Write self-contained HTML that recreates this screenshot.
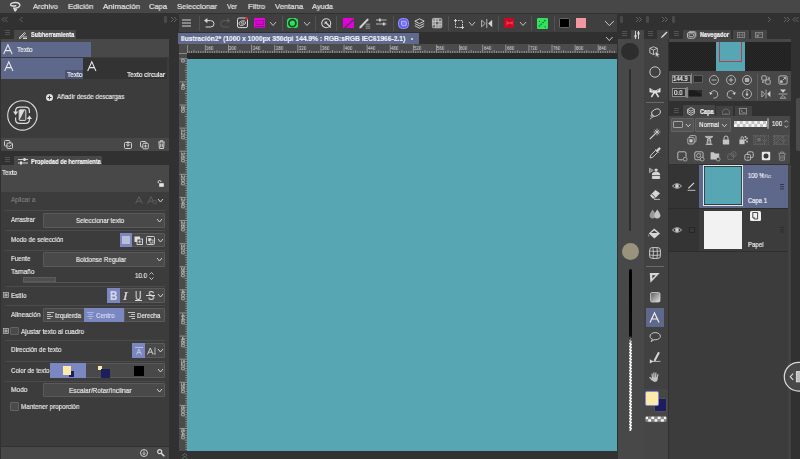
<!DOCTYPE html>
<html><head><meta charset="utf-8"><title>CSP</title><style>
html,body{margin:0;padding:0;width:800px;height:459px;overflow:hidden;background:#3c3c3c}
body{position:relative;font-family:"Liberation Sans",sans-serif}
body>div,body>span,body>svg{position:absolute;display:block}
body>span{white-space:nowrap;transform-origin:0 50%;will-change:transform;-webkit-text-stroke:.22px}
svg{overflow:visible}
</style></head><body>
<div style="left:0px;top:0px;width:800px;height:13px;background:#474747;"></div>
<div style="left:0px;top:13px;width:800px;height:446px;background:#313131;"></div>
<svg style="left:8px;top:1px;" width="14" height="12" viewBox="0 0 14 12"><path d="M7.8 4.7C5.8 5.4 3 5 2.6 3.7C2.3 2.3 5 1.6 7.4 1.6C10.4 1.6 12 2.8 11.8 4.4C11.5 6.3 8.6 7.3 5.9 7.1L7.1 9.9L8.3 8.5" fill="none" stroke="#dedede" stroke-width="1.5" stroke-linecap="round" stroke-linejoin="round"/></svg>
<span id="t0" style="left:33.3px;top:1.80px;font-size:8px;line-height:10px;color:#e2e2e2;font-weight:normal;transform:scaleX(0.9330);">Archivo</span>
<span id="t1" style="left:68px;top:1.80px;font-size:8px;line-height:10px;color:#e2e2e2;font-weight:normal;transform:scaleX(0.9714);">Edición</span>
<span id="t2" style="left:103px;top:1.80px;font-size:8px;line-height:10px;color:#e2e2e2;font-weight:normal;transform:scaleX(0.9904);">Animación</span>
<span id="t3" style="left:149px;top:1.80px;font-size:8px;line-height:10px;color:#e2e2e2;font-weight:normal;transform:scaleX(0.9412);">Capa</span>
<span id="t4" style="left:176.9px;top:1.80px;font-size:8px;line-height:10px;color:#e2e2e2;font-weight:normal;transform:scaleX(0.9567);">Seleccionar</span>
<span id="t5" style="left:226.9px;top:1.80px;font-size:8px;line-height:10px;color:#e2e2e2;font-weight:normal;transform:scaleX(0.8406);">Ver</span>
<span id="t6" style="left:247.5px;top:1.80px;font-size:8px;line-height:10px;color:#e2e2e2;font-weight:normal;transform:scaleX(0.9673);">Filtro</span>
<span id="t7" style="left:274.7px;top:1.80px;font-size:8px;line-height:10px;color:#e2e2e2;font-weight:normal;transform:scaleX(0.9566);">Ventana</span>
<span id="t8" style="left:312px;top:1.80px;font-size:8px;line-height:10px;color:#e2e2e2;font-weight:normal;transform:scaleX(0.9314);">Ayuda</span>
<svg style="left:2px;top:17px;" width="6" height="5" viewBox="0 0 6 5"><path d="M2.5 0L0 2.5L2.5 5M5.5 0L3 2.5L5.5 5" fill="none" stroke="#6a6a6a" stroke-width="0.9"/></svg>
<svg style="left:20px;top:17px;" width="3" height="5" viewBox="0 0 3 5"><path d="M2.5 0L0 2.5L2.5 5" fill="none" stroke="#6a6a6a" stroke-width="0.9"/></svg>
<div style="left:163.7px;top:16px;width:3.4px;height:7.2px;background:#4a4a4a;border-radius:1.2px"></div>
<svg style="left:171px;top:17px;" width="6" height="5" viewBox="0 0 6 5"><path d="M0 0L2.5 2.5L0 5M3 0L5.5 2.5L3 5" fill="none" stroke="#6a6a6a" stroke-width="0.9"/></svg>
<svg style="left:5px;top:30px;" width="5" height="5" viewBox="0 0 5 5"><path d="M0 .5H5M0 2.5H5M0 4.5H5" stroke="#5a5a5a" stroke-width="0.8"/></svg>
<div style="left:14px;top:30px;width:62px;height:9px;background:#484848;border-radius:1px 1px 0 0"></div>
<svg style="left:18px;top:31px;" width="10" height="8" viewBox="0 0 10 8"><path d="M1 7L6.5 1.5L7.5 2.5L2 7.5ZM5 6H9M5 7.5H9" fill="none" stroke="#ddd" stroke-width="0.9"/></svg>
<span id="t9" style="left:30.7px;top:30.10px;font-size:7px;line-height:9px;color:#f2f2f2;font-weight:bold;transform:scaleX(0.8106);">Subherramienta</span>
<div style="left:1px;top:38.5px;width:168.4px;height:99px;background:#484848;"></div>
<div style="left:1px;top:42px;width:89.5px;height:14.5px;background:#5e688b;"></div>
<svg style="left:3.3px;top:44.2px;" width="9.8" height="10.4" viewBox="0 0 9 9" preserveAspectRatio="none"><path d="M.6 8.6L4.5 .6L8.4 8.6M2.2 5.8H6.8" fill="none" stroke="#e8e8e8" stroke-width="1"/></svg>
<span id="t10" style="left:16.5px;top:44.55px;font-size:7.5px;line-height:9.5px;color:#eee;font-weight:normal;transform:scaleX(0.8641);">Texto</span>
<div style="left:1px;top:57px;width:168.4px;height:80.5px;background:#3c3c3c;"></div>
<div style="left:1px;top:58.3px;width:82.2px;height:20.9px;background:#5e688b;"></div>
<div style="left:83.2px;top:58.3px;width:83.8px;height:20.9px;background:#333333;"></div>
<svg style="left:3.6px;top:60.8px;" width="9.6" height="10.4" viewBox="0 0 9 9" preserveAspectRatio="none"><path d="M.6 8.6L4.5 .6L8.4 8.6M2.2 5.8H6.8" fill="none" stroke="#e8e8e8" stroke-width="1"/></svg>
<svg style="left:86.6px;top:60.8px;" width="9.6" height="10.4" viewBox="0 0 9 9" preserveAspectRatio="none"><path d="M.6 8.6L4.5 .6L8.4 8.6M2.2 5.8H6.8" fill="none" stroke="#e8e8e8" stroke-width="1"/></svg>
<div style="left:65.4px;top:69.5px;width:17.8px;height:9.7px;background:#4a5373;"></div>
<span id="t11" style="left:66.5px;top:69.85px;font-size:7.5px;line-height:9.5px;color:#f0f0f0;font-weight:normal;transform:scaleX(0.8641);">Texto</span>
<span id="t12" style="left:127px;top:69.85px;font-size:7.5px;line-height:9.5px;color:#f0f0f0;font-weight:normal;transform:scaleX(0.8600);">Texto circular</span>
<svg style="left:46px;top:93.5px;" width="7" height="7" viewBox="0 0 7 7"><circle cx="3.5" cy="3.5" r="3.5" fill="#e8e8e8"/><path d="M3.5 1.5V5.5M1.5 3.5H5.5" stroke="#3c3c3c" stroke-width="1.1"/></svg>
<span id="t13" style="left:57px;top:92.45px;font-size:7.5px;line-height:9.5px;color:#e0e0e0;font-weight:normal;transform:scaleX(0.8320);">Añadir desde descargas</span>
<svg style="left:7px;top:100px;" width="31" height="31" viewBox="0 0 31 31"><circle cx="15.4" cy="15.4" r="14.7" fill="none" stroke="#dcdcdc" stroke-width="1.1"/><path d="M8.6 17.5V19.5Q8.6 23.4 12.6 23.4H18.4Q22.4 23.4 22.4 19.5V18.5M22.4 13V11Q22.4 7.2 18.4 7.2H12.6Q8.6 7.2 8.6 11V12" fill="none" stroke="#dcdcdc" stroke-width="1.2"/><path d="M19.8 19L22.4 15.4L25 19ZM6 11.6L8.6 15.2L11.2 11.6Z" fill="#dcdcdc"/><rect x="12.2" y="9.8" width="6.6" height="10.6" rx=".8" fill="#4a4a4a" stroke="#dcdcdc" stroke-width="1"/><path d="M12.4 10H17.6L12.4 20.2Z" fill="#dcdcdc"/></svg>
<div style="left:1px;top:137.7px;width:168.4px;height:13.8px;background:#484848;"></div>
<svg style="left:4px;top:140px;" width="9" height="9" viewBox="0 0 9 9"><rect x=".5" y=".5" width="5.5" height="5.5" rx="1" fill="none" stroke="#ddd" stroke-width=".9"/><rect x="3" y="3" width="5.5" height="5.5" rx="1" fill="#484848" stroke="#ddd" stroke-width=".9"/><path d="M4.3 5.6L5.5 7L7.5 4.5" fill="none" stroke="#ddd" stroke-width=".8"/></svg>
<svg style="left:123.5px;top:140.5px;" width="8" height="8" viewBox="0 0 8 8"><rect x=".5" y="1.5" width="7" height="6" rx="1" fill="none" stroke="#ddd" stroke-width=".9"/><path d="M4 0V5M2.3 3.5L4 5.2L5.7 3.5" fill="none" stroke="#ddd" stroke-width=".9"/></svg>
<svg style="left:140px;top:140.5px;" width="9" height="8" viewBox="0 0 9 8"><rect x=".5" y=".5" width="5.5" height="5.5" rx="1" fill="none" stroke="#ddd" stroke-width=".9"/><rect x="2.8" y="2.3" width="5.5" height="5.5" rx="1" fill="#484848" stroke="#ddd" stroke-width=".9"/><path d="M5.5 3.6V6.6M4 5.1H7" stroke="#ddd" stroke-width=".8"/></svg>
<svg style="left:158px;top:140px;" width="7" height="9" viewBox="0 0 7 9"><path d="M.3 2H6.7M2.3 2V.7H4.7V2M1 2.3L1.4 8.5H5.6L6 2.3M2.7 3.5V7.3M4.3 3.5V7.3" fill="none" stroke="#ddd" stroke-width=".9"/></svg>
<svg style="left:5px;top:157px;" width="5" height="5" viewBox="0 0 5 5"><path d="M0 .5H5M0 2.5H5M0 4.5H5" stroke="#5a5a5a" stroke-width="0.8"/></svg>
<div style="left:14.2px;top:156px;width:87.6px;height:9.5px;background:#484848;border-radius:1px 1px 0 0"></div>
<svg style="left:17.5px;top:158px;" width="10" height="7" viewBox="0 0 10 7"><path d="M0 1.5H10M0 5H10" stroke="#ddd" stroke-width=".9"/><rect x="5.5" y="0" width="2" height="3" fill="#ddd"/><rect x="2" y="3.5" width="2" height="3" fill="#ddd"/></svg>
<span id="t14" style="left:30.5px;top:156.80px;font-size:7px;line-height:9px;color:#f2f2f2;font-weight:bold;transform:scaleX(0.8083);">Propiedad de herramienta</span>
<div style="left:1px;top:165px;width:168.4px;height:27px;background:#484848;"></div>
<div style="left:1px;top:192px;width:168.4px;height:254px;background:#3c3c3c;"></div>
<span id="t15" style="left:2px;top:168.05px;font-size:7.5px;line-height:9.5px;color:#eee;font-weight:normal;transform:scaleX(0.8362);">Texto</span>
<svg style="left:156.5px;top:180px;" width="7" height="7" viewBox="0 0 7 7"><path d="M1.2 3.2V2Q1.2 .5 2.6 .5Q4 .5 4 2" fill="none" stroke="#e6e6e6" stroke-width=".9"/><rect x="2.2" y="3.2" width="4.6" height="3.6" fill="#e6e6e6"/></svg>
<span id="t16" style="left:10.5px;top:195.05px;font-size:7.5px;line-height:9.5px;color:#7a7a7a;font-weight:normal;transform:scaleX(0.8394);">Aplicar a</span>
<svg style="left:134.6px;top:196.3px;" width="8" height="8" viewBox="0 0 8 8"><path d="M.6 7.6L4 .6L7.4 7.6M2 5.2H6" fill="none" stroke="#5e5e5e" stroke-width="1"/></svg>
<svg style="left:146.6px;top:196.3px;" width="10" height="8" viewBox="0 0 10 8"><path d="M.6 7.6L4 .6L7.4 7.6M2 5.2H6" fill="none" stroke="#5e5e5e" stroke-width="1"/><circle cx="7.8" cy="6" r="1.8" fill="#3c3c3c" stroke="#5e5e5e" stroke-width=".8"/></svg>
<svg style="left:158.3px;top:199.2px;" width="5" height="3" viewBox="0 0 5 3"><path d="M0 0L2.5 3L5 0" fill="none" stroke="#dcdcdc" stroke-width="0.9"/></svg>
<div style="left:5px;top:210.1px;width:160px;height:1px;background:#4b4b4b;"></div>
<span id="t17" style="left:10.5px;top:215.25px;font-size:7.5px;line-height:9.5px;color:#e2e2e2;font-weight:normal;transform:scaleX(0.8227);">Arrastrar</span>
<div style="left:43.1px;top:213.2px;width:122px;height:14.4px;background:#494949;box-sizing:border-box;border:1px solid #5a5a5a;border-radius:1px"></div>
<span id="t18" style="left:76px;top:215.75px;font-size:7.5px;line-height:9.5px;color:#e2e2e2;font-weight:normal;transform:scaleX(0.8393);">Seleccionar texto</span>
<svg style="left:157px;top:219px;" width="5" height="3" viewBox="0 0 5 3"><path d="M0 0L2.5 3L5 0" fill="none" stroke="#dcdcdc" stroke-width="0.9"/></svg>
<div style="left:5px;top:229.5px;width:160px;height:1px;background:#4b4b4b;"></div>
<span id="t19" style="left:10.5px;top:234.75px;font-size:7.5px;line-height:9.5px;color:#e2e2e2;font-weight:normal;transform:scaleX(0.8394);">Modo de selección</span>
<div style="left:119.6px;top:232.5px;width:45.4px;height:14.4px;background:#494949;box-sizing:border-box;border:1px solid #5a5a5a;border-radius:1px"></div>
<div style="left:119.6px;top:232.5px;width:12.6px;height:14.4px;background:#7a87c0;"></div>
<div style="left:122px;top:235.5px;width:8px;height:8px;background:#b9bdd6;border:0"></div>
<svg style="left:134px;top:235.5px;" width="9" height="9" viewBox="0 0 9 9"><rect x=".5" y=".5" width="5.5" height="5.5" fill="#ddd"/><rect x="3" y="3" width="5.5" height="5.5" fill="#494949" stroke="#ddd" stroke-width=".9"/><path d="M5.8 4.2V7.4M4.2 5.8H7.4" stroke="#ddd" stroke-width=".8"/></svg>
<svg style="left:146px;top:235.5px;" width="9" height="9" viewBox="0 0 9 9"><rect x=".5" y=".5" width="8" height="8" rx="1" fill="none" stroke="#ddd" stroke-width=".9"/><rect x="2.2" y="2.2" width="3" height="3" fill="#ddd"/><rect x="4" y="4" width="3" height="3" fill="#494949" stroke="#ddd" stroke-width=".7"/></svg>
<svg style="left:158px;top:238.5px;" width="5" height="3" viewBox="0 0 5 3"><path d="M0 0L2.5 3L5 0" fill="none" stroke="#dcdcdc" stroke-width="0.9"/></svg>
<div style="left:5px;top:249.5px;width:160px;height:1px;background:#4b4b4b;"></div>
<span id="t20" style="left:10.5px;top:254.05px;font-size:7.5px;line-height:9.5px;color:#e2e2e2;font-weight:normal;transform:scaleX(0.8348);">Fuente</span>
<div style="left:43.1px;top:252px;width:122px;height:14.6px;background:#494949;box-sizing:border-box;border:1px solid #5a5a5a;border-radius:1px"></div>
<span id="t21" style="left:76px;top:254.85px;font-size:7.5px;line-height:9.5px;color:#e2e2e2;font-weight:normal;transform:scaleX(0.8386);">Boldonse Regular</span>
<svg style="left:157px;top:258px;" width="5" height="3" viewBox="0 0 5 3"><path d="M0 0L2.5 3L5 0" fill="none" stroke="#dcdcdc" stroke-width="0.9"/></svg>
<span id="t22" style="left:10.5px;top:267.25px;font-size:7.5px;line-height:9.5px;color:#e2e2e2;font-weight:normal;transform:scaleX(0.8806);">Tamaño</span>
<div style="left:23px;top:277px;width:33px;height:4.5px;background:#4e4e4e;box-sizing:border-box;border:1px solid #5c5c5c"></div>
<div style="left:23px;top:281.5px;width:97px;height:1px;background:#555;"></div>
<span id="t23" style="left:135px;top:270.55px;font-size:7.5px;line-height:9.5px;color:#e2e2e2;font-weight:normal;transform:scaleX(0.8214);">10.0</span>
<svg style="left:149px;top:272px;" width="5" height="8" viewBox="0 0 5 8"><path d="M.5 2.5L2.5 .5L4.5 2.5M.5 5.5L2.5 7.5L4.5 5.5" fill="none" stroke="#ddd" stroke-width=".8"/></svg>
<div style="left:5px;top:285.5px;width:160px;height:1px;background:#4b4b4b;"></div>
<svg style="left:3px;top:292.3px;" width="6" height="6" viewBox="0 0 6 6"><rect x=".4" y=".4" width="5.2" height="5.2" fill="#5a5a5a" stroke="#bdbdbd" stroke-width=".7"/><path d="M3 1.3V4.7M1.3 3H4.7" stroke="#cfcfcf" stroke-width=".8"/></svg>
<span id="t24" style="left:10.5px;top:290.55px;font-size:7.5px;line-height:9.5px;color:#e2e2e2;font-weight:normal;transform:scaleX(0.8450);">Estilo</span>
<div style="left:107.1px;top:288.1px;width:58px;height:14.6px;background:#494949;box-sizing:border-box;border:1px solid #5a5a5a;border-radius:1px"></div>
<div style="left:107.1px;top:288.1px;width:12.9px;height:14.6px;background:#7a87c0;"></div>
<span id="t25" style="left:109.9px;top:288.60px;font-size:12px;line-height:14px;color:#d4d6e4;font-weight:bold;transform:scaleX(0.8418);">B</span>
<span id="t26" style="left:123.3px;top:288.50px;font-size:12.2px;line-height:14.2px;color:#dcdcdc;font-weight:normal;transform:scaleX(1.1323);font-style:italic;font-family:Liberation Serif">I</span>
<span id="t27" style="left:135.2px;top:288.60px;font-size:12px;line-height:14px;color:#dcdcdc;font-weight:normal;transform:scaleX(0.7380);">U</span>
<div style="left:134.6px;top:299.8px;width:7.6px;height:0.9px;background:#dcdcdc;"></div>
<span id="t28" style="left:147.6px;top:288.60px;font-size:12px;line-height:14px;color:#dcdcdc;font-weight:normal;transform:scaleX(0.7984);">S</span>
<div style="left:146.4px;top:295.2px;width:8.8px;height:0.9px;background:#dcdcdc;"></div>
<svg style="left:158px;top:294px;" width="5" height="3" viewBox="0 0 5 3"><path d="M0 0L2.5 3L5 0" fill="none" stroke="#dcdcdc" stroke-width="0.9"/></svg>
<div style="left:5px;top:305px;width:160px;height:1px;background:#4b4b4b;"></div>
<span id="t29" style="left:10.5px;top:309.55px;font-size:7.5px;line-height:9.5px;color:#e2e2e2;font-weight:normal;transform:scaleX(0.8524);">Alineación</span>
<div style="left:43.1px;top:308px;width:122px;height:14.3px;background:#494949;box-sizing:border-box;border:1px solid #5a5a5a;border-radius:1px"></div>
<div style="left:84.3px;top:308px;width:40px;height:14.3px;background:#7a87c0;"></div>
<div style="left:124.3px;top:309px;width:1px;height:12.3px;background:#5a5a5a;"></div>
<svg style="left:46.5px;top:311.5px;" width="7" height="7" viewBox="0 0 7 7"><path d="M0 .5H7M0 2.5H4M0 4.5H6M0 6.5H3.5" stroke="#ddd" stroke-width=".8"/></svg>
<span id="t30" style="left:54.9px;top:310.55px;font-size:7.5px;line-height:9.5px;color:#e2e2e2;font-weight:normal;transform:scaleX(0.8458);">Izquierda</span>
<svg style="left:86.6px;top:311.5px;" width="7" height="7" viewBox="0 0 7 7"><path d="M0 .5H7M1.5 2.5H5.5M.5 4.5H6.5M2 6.5H5" stroke="#b9c0e2" stroke-width=".8"/></svg>
<span id="t31" style="left:95.9px;top:310.55px;font-size:7.5px;line-height:9.5px;color:#d6daf0;font-weight:normal;transform:scaleX(0.8350);">Centro</span>
<svg style="left:127.5px;top:311.5px;" width="7" height="7" viewBox="0 0 7 7"><path d="M0 .5H7M3 2.5H7M1 4.5H7M3.5 6.5H7" stroke="#ddd" stroke-width=".8"/></svg>
<span id="t32" style="left:137px;top:310.55px;font-size:7.5px;line-height:9.5px;color:#e2e2e2;font-weight:normal;transform:scaleX(0.8181);">Derecha</span>
<svg style="left:3px;top:328.3px;" width="6" height="6" viewBox="0 0 6 6"><rect x=".4" y=".4" width="5.2" height="5.2" fill="#5a5a5a" stroke="#bdbdbd" stroke-width=".7"/><path d="M3 1.3V4.7M1.3 3H4.7" stroke="#cfcfcf" stroke-width=".8"/></svg>
<div style="left:10px;top:326.5px;width:9px;height:8.5px;background:#4a4a4a;border-radius:1px;box-sizing:border-box;border:.7px solid #626262"></div>
<span id="t33" style="left:20.5px;top:326.55px;font-size:7.5px;line-height:9.5px;color:#e2e2e2;font-weight:normal;transform:scaleX(0.8442);">Ajustar texto al cuadro</span>
<div style="left:5px;top:340px;width:160px;height:1px;background:#4b4b4b;"></div>
<span id="t34" style="left:10.5px;top:345.25px;font-size:7.5px;line-height:9.5px;color:#e2e2e2;font-weight:normal;transform:scaleX(0.8412);">Dirección de texto</span>
<div style="left:132px;top:343.3px;width:33px;height:14.4px;background:#494949;box-sizing:border-box;border:1px solid #5a5a5a;border-radius:1px"></div>
<div style="left:132px;top:343.3px;width:13px;height:14.4px;background:#7a87c0;"></div>
<svg style="left:134.5px;top:346.5px;" width="8" height="8" viewBox="0 0 8 8"><path d="M0 .5H8" stroke="#c7cbe6" stroke-width=".8"/><path d="M1.5 7.5L4 2.2L6.5 7.5M2.5 5.6H5.5" fill="none" stroke="#c7cbe6" stroke-width=".9"/></svg>
<svg style="left:147px;top:346.5px;" width="9" height="8" viewBox="0 0 9 8"><path d="M.5 7.5L3.3 1L6.1 7.5M1.6 5.2H5" fill="none" stroke="#ddd" stroke-width=".9"/><path d="M8 .5V7.5M7 6.2L8 7.5" fill="none" stroke="#ddd" stroke-width=".7"/></svg>
<svg style="left:158px;top:349.3px;" width="5" height="3" viewBox="0 0 5 3"><path d="M0 0L2.5 3L5 0" fill="none" stroke="#dcdcdc" stroke-width="0.9"/></svg>
<div style="left:5px;top:361px;width:160px;height:1px;background:#4b4b4b;"></div>
<span id="t35" style="left:10.5px;top:365.55px;font-size:7.5px;line-height:9.5px;color:#e2e2e2;font-weight:normal;transform:scaleX(0.8244);">Color de texto</span>
<div style="left:50px;top:363.3px;width:115px;height:14.5px;background:#494949;box-sizing:border-box;border:1px solid #5a5a5a;border-radius:1px"></div>
<div style="left:50px;top:363.3px;width:36px;height:14.5px;background:#7a87c0;"></div>
<div style="left:68.5px;top:371px;width:5.3px;height:5.7px;background:#1d1f5c;"></div>
<div style="left:62.5px;top:366px;width:8.5px;height:8.5px;background:#fdeaa8;"></div>
<div style="left:98px;top:366px;width:4px;height:4px;background:#fdeaa8;"></div>
<div style="left:100.5px;top:368.5px;width:9px;height:9px;background:#1d1f5c;"></div>
<div style="left:134px;top:366.3px;width:9.5px;height:9.5px;background:#000;"></div>
<svg style="left:158px;top:369.3px;" width="5" height="3" viewBox="0 0 5 3"><path d="M0 0L2.5 3L5 0" fill="none" stroke="#dcdcdc" stroke-width="0.9"/></svg>
<div style="left:5px;top:381px;width:160px;height:1px;background:#4b4b4b;"></div>
<span id="t36" style="left:10.5px;top:385.25px;font-size:7.5px;line-height:9.5px;color:#e2e2e2;font-weight:normal;transform:scaleX(0.8793);">Modo</span>
<div style="left:43.1px;top:382.7px;width:122px;height:14.6px;background:#494949;box-sizing:border-box;border:1px solid #5a5a5a;border-radius:1px"></div>
<span id="t37" style="left:69px;top:385.95px;font-size:7.5px;line-height:9.5px;color:#e2e2e2;font-weight:normal;transform:scaleX(0.8716);">Escalar/Rotar/Inclinar</span>
<svg style="left:157px;top:389px;" width="5" height="3" viewBox="0 0 5 3"><path d="M0 0L2.5 3L5 0" fill="none" stroke="#dcdcdc" stroke-width="0.9"/></svg>
<div style="left:10px;top:402.3px;width:9px;height:8.5px;background:#4a4a4a;border-radius:1px;box-sizing:border-box;border:.7px solid #626262"></div>
<span id="t38" style="left:20.5px;top:401.75px;font-size:7.5px;line-height:9.5px;color:#e2e2e2;font-weight:normal;transform:scaleX(0.8451);">Mantener proporción</span>
<div style="left:1px;top:446.5px;width:168.4px;height:12.5px;background:#484848;"></div>
<svg style="left:140px;top:449px;" width="8" height="8" viewBox="0 0 8 8"><circle cx="4" cy="4" r="3.5" fill="none" stroke="#ddd" stroke-width=".9"/><path d="M4 1.8V5.6M2.6 4.3L4 5.8L5.4 4.3" fill="none" stroke="#ddd" stroke-width=".8"/></svg>
<svg style="left:157px;top:449px;" width="8" height="8" viewBox="0 0 8 8"><circle cx="2.7" cy="2.7" r="2" fill="none" stroke="#ddd" stroke-width="1.2"/><path d="M4.2 4.2L7.3 7.3" stroke="#ddd" stroke-width="1.6"/></svg>
<div style="left:178.6px;top:13.8px;width:438.4px;height:18.4px;background:#3f3f3f;"></div>
<svg style="left:182.2px;top:18.9px;" width="9" height="8" viewBox="0 0 9 8"><path d="M0 1H9M0 4H9M0 7H9" stroke="#d4d4d4" stroke-width="1"/></svg>
<div style="left:198.5px;top:16px;width:1px;height:15px;background:#525252;"></div>
<svg style="left:203.6px;top:18px;" width="10.6" height="9.6" viewBox="0 0 10.6 9.6"><path d="M3.4 0L0 2.6L3.4 5.2Z" fill="#d6d6d6"/><path d="M2.6 2.6H6.6Q10 2.6 10 5.8Q10 9 6.6 9H1.6" fill="none" stroke="#d6d6d6" stroke-width="1"/></svg>
<svg style="left:220.4px;top:18px;" width="10.6" height="9.6" viewBox="0 0 10.6 9.6"><path d="M7.2 0L10.6 2.6L7.2 5.2Z" fill="#5c5c5c"/><path d="M8 2.6H4Q.6 2.6 .6 5.8Q.6 9 4 9H9" fill="none" stroke="#5c5c5c" stroke-width="1"/></svg>
<svg style="left:236.8px;top:17.3px;" width="11.4" height="11" viewBox="0 0 11.4 11"><rect x=".5" y="1" width="10" height="9.6" rx="1.6" fill="none" stroke="#ddd" stroke-width="1"/><ellipse cx="5.3" cy="6.1" rx="3.5" ry="2.2" fill="none" stroke="#d4d4d4" stroke-width=".8" transform="rotate(-18 5.3 6.1)"/><ellipse cx="5.5" cy="6" rx="1.6" ry=".9" fill="none" stroke="#d4d4d4" stroke-width=".7" transform="rotate(-18 5.5 6)"/><circle cx="9.6" cy="1.4" r="1.4" fill="#e8213a"/></svg>
<div style="left:254.2px;top:17.8px;width:10.8px;height:10.5px;background:#ea00e0;border-radius:1px"></div>
<svg style="left:255px;top:19.6px;" width="9.2" height="8" viewBox="0 0 9.2 8"><rect x="1" y=".5" width="7.2" height="4" fill="none" stroke="#90108c" stroke-width=".9"/><path d="M3 3.6L4.6 2L6.2 3.6" fill="none" stroke="#90108c" stroke-width=".8"/><path d="M0 6.6H9.2" stroke="#7a1478" stroke-width="1.1"/></svg>
<svg style="left:270px;top:21.5px;" width="6" height="3.5" viewBox="0 0 6 3.5"><path d="M0 0L3.0 3.5L6 0" fill="none" stroke="#ccc" stroke-width="0.9"/></svg>
<div style="left:281.5px;top:16px;width:1px;height:15px;background:#525252;"></div>
<div style="left:287.3px;top:17.8px;width:10.8px;height:10.4px;background:#26e358;"></div>
<svg style="left:287.3px;top:17.8px;" width="10.8" height="10.4" viewBox="0 0 10.8 10.4"><circle cx="5.4" cy="5.2" r="3.5" fill="none" stroke="#2c3a2e" stroke-width="1.7"/><path d="M0 0H2L0 2ZM10.8 0H8.8L10.8 2ZM0 10.4H2L0 8.4ZM10.8 10.4H8.8L10.8 8.4Z" fill="#3f3f3f"/></svg>
<svg style="left:304px;top:21.5px;" width="6" height="3.5" viewBox="0 0 6 3.5"><path d="M0 0L3.0 3.5L6 0" fill="none" stroke="#ccc" stroke-width="0.9"/></svg>
<div style="left:314.5px;top:16px;width:1px;height:15px;background:#525252;"></div>
<svg style="left:320.6px;top:17.6px;" width="11.4" height="11" viewBox="0 0 11.4 11"><circle cx="5.2" cy="5.2" r="4.5" fill="none" stroke="#d4d4d4" stroke-width="1.1"/><path d="M3.6 3.6H6.6L5.7 4.5L10.2 9L9.2 10L4.7 5.5L3.6 6.6Z" fill="#d4d4d4"/></svg>
<div style="left:336px;top:16px;width:1px;height:15px;background:#525252;"></div>
<div style="left:342.7px;top:18.2px;width:11.1px;height:10.1px;background:#e400dc;"></div>
<svg style="left:342.7px;top:18.2px;" width="11.1" height="10.1" viewBox="0 0 11.1 10.1"><path d="M.6 10.1L11.1 .4V2.2L2.6 10.1Z" fill="#4a3a4a"/></svg>
<svg style="left:359px;top:17.6px;" width="12.4" height="11" viewBox="0 0 12.4 11"><path d="M1.6 9L8.6 1.6" stroke="#cfcfcf" stroke-width="2.1" stroke-linecap="round"/><path d="M.4 10.6L.9 8.4L2.6 10Z" fill="#cfcfcf"/><path d="M6.6 6.2H11.2M6.6 8.2H11.2M6.6 10.2H11.2" stroke="#bdbdbd" stroke-width=".7"/></svg>
<svg style="left:376px;top:18.2px;" width="10.6" height="8" viewBox="0 0 10.6 8"><path d="M0 2H10.6M0 6H10.6" stroke="#d4d4d4" stroke-width=".8"/><rect x="2.9" y=".5" width="1.8" height="3" fill="#d4d4d4"/><rect x="6.9" y="4.5" width="1.8" height="3" fill="#d4d4d4"/></svg>
<div style="left:393px;top:16px;width:1px;height:15px;background:#525252;"></div>
<div style="left:397.6px;top:17.6px;width:11.4px;height:11px;background:#5a5aee;border-radius:4.5px;box-sizing:border-box;border:.8px solid #9a9afc"></div>
<svg style="left:397.6px;top:17.6px;" width="11.4" height="11" viewBox="0 0 11.4 11"><path d="M3.4 3.2H7Q8.4 3.2 8.4 4.6V6.4Q8.4 7.8 7 7.8H4.8Q3.4 7.8 3.4 6.4Z" fill="#7a7af6" stroke="#c4c4ff" stroke-width=".9"/></svg>
<svg style="left:413.5px;top:18px;" width="11" height="11" viewBox="0 0 11 11"><path d="M5.5 .8L10.2 3.2L5.5 5.6L.8 3.2Z" fill="none" stroke="#ddd" stroke-width=".9"/><path d="M.8 5.5L5.5 7.9L10.2 5.5M.8 7.8L5.5 10.2L10.2 7.8" fill="none" stroke="#ddd" stroke-width=".9"/></svg>
<svg style="left:431.6px;top:17.8px;" width="10.2" height="10.2" viewBox="0 0 10.2 10.2"><rect x=".4" y=".4" width="9.4" height="9.4" rx="1.2" fill="#9a9a9a" stroke="#c4c4c4" stroke-width=".8"/><path d="M3.5 .4V9.8M6.7 .4V9.8M.4 3.5H9.8M.4 6.7H9.8" stroke="#d0d0d0" stroke-width=".6"/><rect x="3.9" y="3.9" width="2.4" height="2.4" fill="#5e5e5e"/><rect x="7.1" y=".9" width="2.2" height="2.2" fill="#6e6e6e"/><rect x=".9" y="7.1" width="2.2" height="2.2" fill="#6e6e6e"/></svg>
<div style="left:447.5px;top:16px;width:1px;height:15px;background:#525252;"></div>
<svg style="left:453.5px;top:18.5px;" width="10" height="10" viewBox="0 0 10 10"><rect x="1.5" y="1.5" width="7" height="7" fill="none" stroke="#ddd" stroke-width=".9" stroke-dasharray="1.6 1"/><path d="M1.5 0V3M0 1.5H3M8.5 7V10M7 8.5H10" stroke="#ddd" stroke-width=".9"/></svg>
<svg style="left:469px;top:21.5px;" width="6" height="3.5" viewBox="0 0 6 3.5"><path d="M0 0L3.0 3.5L6 0" fill="none" stroke="#ccc" stroke-width="0.9"/></svg>
<svg style="left:481.2px;top:18.6px;" width="11.6" height="9" viewBox="0 0 11.6 9"><path d="M.6 1.2L4.2 4.5L.6 7.8Z" fill="none" stroke="#cfcfcf" stroke-width=".8"/><path d="M11.2 .8L7.2 4.5L11.2 8.2Z" fill="#d4d4d4"/><path d="M5.8 0V9" stroke="#d4d4d4" stroke-width=".8"/></svg>
<div style="left:498px;top:16px;width:1px;height:15px;background:#525252;"></div>
<div style="left:503.7px;top:18.2px;width:10.8px;height:10.1px;background:#c60a22;"></div>
<svg style="left:503.7px;top:18.2px;" width="10.8" height="10.1" viewBox="0 0 10.8 10.1"><path d="M2.4 2.4L5.6 5L2.4 7.6ZM8.6 2.8L6.4 5L8.6 7.2Z" fill="#f23850"/><path d="M5 5H8.8" stroke="#f23850" stroke-width="1.4"/></svg>
<svg style="left:520px;top:21.5px;" width="6" height="3.5" viewBox="0 0 6 3.5"><path d="M0 0L3.0 3.5L6 0" fill="none" stroke="#ccc" stroke-width="0.9"/></svg>
<div style="left:531px;top:16px;width:1px;height:15px;background:#525252;"></div>
<div style="left:537px;top:17.5px;width:11.2px;height:11.5px;background:#30e45e;border-radius:1px"></div>
<svg style="left:537px;top:17.5px;" width="11.2" height="11.5" viewBox="0 0 11.2 11.5"><path d="M2 8.5L8.5 2" stroke="#157a2a" stroke-width="1.5" stroke-dasharray="1.5 1"/><path d="M2 3L3 4M7.5 8.5L9 9.5" stroke="#157a2a" stroke-width="1"/></svg>
<div style="left:553.5px;top:16px;width:1px;height:15px;background:#525252;"></div>
<div style="left:558.8px;top:17.5px;width:11px;height:10.6px;background:#000;box-sizing:border-box;border:.8px solid #666;border-radius:1.2px"></div>
<div style="left:576px;top:18px;width:10px;height:10px;background:#f0979f;"></div>
<svg style="left:605.4px;top:20.9px;" width="8.8" height="4.6" viewBox="0 0 8.8 4.6"><path d="M0 0L4.4 4.6L8.8 0" fill="none" stroke="#d8d8d8" stroke-width="0.9"/></svg>
<div style="left:178.6px;top:32.2px;width:438.4px;height:12px;background:#303030;"></div>
<div style="left:178.3px;top:33.1px;width:240.7px;height:11.3px;background:#5f6a8d;"></div>
<span id="t39" style="left:180.7px;top:33.80px;font-size:8px;line-height:10px;color:#eef0f8;font-weight:bold;transform:scaleX(0.8379);">Ilustración2* (1000 x 1000px 350dpi 144.9% : RGB:sRGB IEC61966-2.1)</span>
<div style="left:411px;top:37.8px;width:2px;height:2px;background:#e8e8f0;border-radius:1px"></div>
<svg style="left:606.2px;top:36.7px;" width="6.6" height="3.6" viewBox="0 0 6.6 3.6"><path d="M0 0L3.3 3.6L6.6 0" fill="none" stroke="#d8d8d8" stroke-width="0.9"/></svg>
<div style="left:179px;top:44.2px;width:438px;height:8.9px;background:#4b4b4b;"></div>
<div style="left:179px;top:53px;width:438px;height:6px;background:#2a2a2a;"></div>
<div style="left:187.4px;top:59px;width:429.6px;height:392.2px;background:#56a7b3;"></div>
<div style="left:179px;top:53px;width:8.4px;height:398.2px;background:#4b4b4b;"></div>
<div style="left:179px;top:44px;width:8.4px;height:9px;background:#4b4b4b;"></div>
<div style="left:186.9px;top:44.6px;width:0.8px;height:8.4px;background:#8a8a8a;"></div>
<div style="left:179.4px;top:52.6px;width:8px;height:0.7px;background:#8a8a8a;"></div>
<div style="left:179px;top:451.2px;width:438px;height:7.8px;background:#323232;"></div>
<svg style="left:182.3px;top:452.6px;" width="5.4" height="6" viewBox="0 0 5.4 6"><path d="M.3 2.8L2.7 .4L5.1 2.8M.3 5.6L2.7 3.2L5.1 5.6" fill="none" stroke="#7c7c7c" stroke-width=".8"/></svg>
<svg style="left:179px;top:44px;" width="438" height="9" viewBox="0 0 438 9"><path d="M26.40 .8V9M49.51 .8V9M72.62 .8V9M95.72 .8V9M118.83 .8V9M141.94 .8V9M165.05 .8V9M188.16 .8V9M211.26 .8V9M234.37 .8V9M257.48 .8V9M280.59 .8V9M303.70 .8V9M326.80 .8V9M349.91 .8V9M373.02 .8V9M396.13 .8V9M419.24 .8V9" stroke="#a8a8a8" stroke-width=".8" fill="none"/><path d="M10.22 7V9M12.54 7V9M14.85 6.2V9M17.16 7V9M19.47 7V9M21.78 7V9M24.09 7V9M28.71 7V9M31.02 7V9M33.33 7V9M35.64 7V9M37.95 6.2V9M40.26 7V9M42.58 7V9M44.89 7V9M47.20 7V9M51.82 7V9M54.13 7V9M56.44 7V9M58.75 7V9M61.06 6.2V9M63.37 7V9M65.68 7V9M67.99 7V9M70.31 7V9M74.93 7V9M77.24 7V9M79.55 7V9M81.86 7V9M84.17 6.2V9M86.48 7V9M88.79 7V9M91.10 7V9M93.41 7V9M98.03 7V9M100.35 7V9M102.66 7V9M104.97 7V9M107.28 6.2V9M109.59 7V9M111.90 7V9M114.21 7V9M116.52 7V9M121.14 7V9M123.45 7V9M125.76 7V9M128.08 7V9M130.39 6.2V9M132.70 7V9M135.01 7V9M137.32 7V9M139.63 7V9M144.25 7V9M146.56 7V9M148.87 7V9M151.18 7V9M153.49 6.2V9M155.80 7V9M158.12 7V9M160.43 7V9M162.74 7V9M167.36 7V9M169.67 7V9M171.98 7V9M174.29 7V9M176.60 6.2V9M178.91 7V9M181.22 7V9M183.53 7V9M185.85 7V9M190.47 7V9M192.78 7V9M195.09 7V9M197.40 7V9M199.71 6.2V9M202.02 7V9M204.33 7V9M206.64 7V9M208.95 7V9M213.57 7V9M215.89 7V9M218.20 7V9M220.51 7V9M222.82 6.2V9M225.13 7V9M227.44 7V9M229.75 7V9M232.06 7V9M236.68 7V9M238.99 7V9M241.30 7V9M243.62 7V9M245.93 6.2V9M248.24 7V9M250.55 7V9M252.86 7V9M255.17 7V9M259.79 7V9M262.10 7V9M264.41 7V9M266.72 7V9M269.03 6.2V9M271.34 7V9M273.66 7V9M275.97 7V9M278.28 7V9M282.90 7V9M285.21 7V9M287.52 7V9M289.83 7V9M292.14 6.2V9M294.45 7V9M296.76 7V9M299.07 7V9M301.39 7V9M306.01 7V9M308.32 7V9M310.63 7V9M312.94 7V9M315.25 6.2V9M317.56 7V9M319.87 7V9M322.18 7V9M324.49 7V9M329.11 7V9M331.43 7V9M333.74 7V9M336.05 7V9M338.36 6.2V9M340.67 7V9M342.98 7V9M345.29 7V9M347.60 7V9M352.22 7V9M354.53 7V9M356.84 7V9M359.16 7V9M361.47 6.2V9M363.78 7V9M366.09 7V9M368.40 7V9M370.71 7V9M375.33 7V9M377.64 7V9M379.95 7V9M382.26 7V9M384.57 6.2V9M386.88 7V9M389.20 7V9M391.51 7V9M393.82 7V9M398.44 7V9M400.75 7V9M403.06 7V9M405.37 7V9M407.68 6.2V9M409.99 7V9M412.30 7V9M414.61 7V9M416.93 7V9M421.55 7V9M423.86 7V9M426.17 7V9M428.48 7V9M430.79 6.2V9M433.10 7V9M435.41 7V9" stroke="#a4a4a4" stroke-width=".8" fill="none"/></svg>
<span id="t40" style="left:206.3px;top:43.70px;font-size:6px;line-height:8px;color:#b4b4b4;font-weight:normal;transform:scaleX(0.7289);">160</span>
<span id="t41" style="left:229.40800000000002px;top:43.70px;font-size:6px;line-height:8px;color:#b4b4b4;font-weight:normal;transform:scaleX(0.7289);">200</span>
<span id="t42" style="left:252.51600000000002px;top:43.70px;font-size:6px;line-height:8px;color:#b4b4b4;font-weight:normal;transform:scaleX(0.7289);">240</span>
<span id="t43" style="left:275.62399999999997px;top:43.70px;font-size:6px;line-height:8px;color:#b4b4b4;font-weight:normal;transform:scaleX(0.7289);">280</span>
<span id="t44" style="left:298.73199999999997px;top:43.70px;font-size:6px;line-height:8px;color:#b4b4b4;font-weight:normal;transform:scaleX(0.7289);">320</span>
<span id="t45" style="left:321.84px;top:43.70px;font-size:6px;line-height:8px;color:#b4b4b4;font-weight:normal;transform:scaleX(0.7289);">360</span>
<span id="t46" style="left:344.948px;top:43.70px;font-size:6px;line-height:8px;color:#b4b4b4;font-weight:normal;transform:scaleX(0.7289);">400</span>
<span id="t47" style="left:368.056px;top:43.70px;font-size:6px;line-height:8px;color:#b4b4b4;font-weight:normal;transform:scaleX(0.7289);">440</span>
<span id="t48" style="left:391.164px;top:43.70px;font-size:6px;line-height:8px;color:#b4b4b4;font-weight:normal;transform:scaleX(0.7289);">480</span>
<span id="t49" style="left:414.272px;top:43.70px;font-size:6px;line-height:8px;color:#b4b4b4;font-weight:normal;transform:scaleX(0.7289);">520</span>
<span id="t50" style="left:437.38px;top:43.70px;font-size:6px;line-height:8px;color:#b4b4b4;font-weight:normal;transform:scaleX(0.7289);">560</span>
<span id="t51" style="left:460.48799999999994px;top:43.70px;font-size:6px;line-height:8px;color:#b4b4b4;font-weight:normal;transform:scaleX(0.7289);">600</span>
<span id="t52" style="left:483.596px;top:43.70px;font-size:6px;line-height:8px;color:#b4b4b4;font-weight:normal;transform:scaleX(0.7289);">640</span>
<span id="t53" style="left:506.70399999999995px;top:43.70px;font-size:6px;line-height:8px;color:#b4b4b4;font-weight:normal;transform:scaleX(0.7289);">680</span>
<span id="t54" style="left:529.812px;top:43.70px;font-size:6px;line-height:8px;color:#b4b4b4;font-weight:normal;transform:scaleX(0.7289);">720</span>
<span id="t55" style="left:552.92px;top:43.70px;font-size:6px;line-height:8px;color:#b4b4b4;font-weight:normal;transform:scaleX(0.7289);">760</span>
<span id="t56" style="left:576.028px;top:43.70px;font-size:6px;line-height:8px;color:#b4b4b4;font-weight:normal;transform:scaleX(0.7289);">800</span>
<span id="t57" style="left:599.136px;top:43.70px;font-size:6px;line-height:8px;color:#b4b4b4;font-weight:normal;transform:scaleX(0.7289);">840</span>
<svg style="left:179px;top:53px;" width="9" height="398" viewBox="0 0 9 398"><path d="M.6 5.80H8.4M.6 28.91H8.4M.6 52.02H8.4M.6 75.12H8.4M.6 98.23H8.4M.6 121.34H8.4M.6 144.45H8.4M.6 167.56H8.4M.6 190.66H8.4M.6 213.77H8.4M.6 236.88H8.4M.6 259.99H8.4M.6 283.10H8.4M.6 306.20H8.4M.6 329.31H8.4M.6 352.42H8.4M.6 375.53H8.4" stroke="#a8a8a8" stroke-width=".8" fill="none"/><path d="M6.4 8.11H8.4M6.4 10.42H8.4M6.4 12.73H8.4M6.4 15.04H8.4M5.6 17.35H8.4M6.4 19.66H8.4M6.4 21.98H8.4M6.4 24.29H8.4M6.4 26.60H8.4M6.4 31.22H8.4M6.4 33.53H8.4M6.4 35.84H8.4M6.4 38.15H8.4M5.6 40.46H8.4M6.4 42.77H8.4M6.4 45.08H8.4M6.4 47.39H8.4M6.4 49.71H8.4M6.4 54.33H8.4M6.4 56.64H8.4M6.4 58.95H8.4M6.4 61.26H8.4M5.6 63.57H8.4M6.4 65.88H8.4M6.4 68.19H8.4M6.4 70.50H8.4M6.4 72.81H8.4M6.4 77.43H8.4M6.4 79.75H8.4M6.4 82.06H8.4M6.4 84.37H8.4M5.6 86.68H8.4M6.4 88.99H8.4M6.4 91.30H8.4M6.4 93.61H8.4M6.4 95.92H8.4M6.4 100.54H8.4M6.4 102.85H8.4M6.4 105.16H8.4M6.4 107.48H8.4M5.6 109.79H8.4M6.4 112.10H8.4M6.4 114.41H8.4M6.4 116.72H8.4M6.4 119.03H8.4M6.4 123.65H8.4M6.4 125.96H8.4M6.4 128.27H8.4M6.4 130.58H8.4M5.6 132.89H8.4M6.4 135.20H8.4M6.4 137.52H8.4M6.4 139.83H8.4M6.4 142.14H8.4M6.4 146.76H8.4M6.4 149.07H8.4M6.4 151.38H8.4M6.4 153.69H8.4M5.6 156.00H8.4M6.4 158.31H8.4M6.4 160.62H8.4M6.4 162.93H8.4M6.4 165.25H8.4M6.4 169.87H8.4M6.4 172.18H8.4M6.4 174.49H8.4M6.4 176.80H8.4M5.6 179.11H8.4M6.4 181.42H8.4M6.4 183.73H8.4M6.4 186.04H8.4M6.4 188.35H8.4M6.4 192.97H8.4M6.4 195.29H8.4M6.4 197.60H8.4M6.4 199.91H8.4M5.6 202.22H8.4M6.4 204.53H8.4M6.4 206.84H8.4M6.4 209.15H8.4M6.4 211.46H8.4M6.4 216.08H8.4M6.4 218.39H8.4M6.4 220.70H8.4M6.4 223.02H8.4M5.6 225.33H8.4M6.4 227.64H8.4M6.4 229.95H8.4M6.4 232.26H8.4M6.4 234.57H8.4M6.4 239.19H8.4M6.4 241.50H8.4M6.4 243.81H8.4M6.4 246.12H8.4M5.6 248.43H8.4M6.4 250.74H8.4M6.4 253.06H8.4M6.4 255.37H8.4M6.4 257.68H8.4M6.4 262.30H8.4M6.4 264.61H8.4M6.4 266.92H8.4M6.4 269.23H8.4M5.6 271.54H8.4M6.4 273.85H8.4M6.4 276.16H8.4M6.4 278.47H8.4M6.4 280.79H8.4M6.4 285.41H8.4M6.4 287.72H8.4M6.4 290.03H8.4M6.4 292.34H8.4M5.6 294.65H8.4M6.4 296.96H8.4M6.4 299.27H8.4M6.4 301.58H8.4M6.4 303.89H8.4M6.4 308.51H8.4M6.4 310.83H8.4M6.4 313.14H8.4M6.4 315.45H8.4M5.6 317.76H8.4M6.4 320.07H8.4M6.4 322.38H8.4M6.4 324.69H8.4M6.4 327.00H8.4M6.4 331.62H8.4M6.4 333.93H8.4M6.4 336.24H8.4M6.4 338.56H8.4M5.6 340.87H8.4M6.4 343.18H8.4M6.4 345.49H8.4M6.4 347.80H8.4M6.4 350.11H8.4M6.4 354.73H8.4M6.4 357.04H8.4M6.4 359.35H8.4M6.4 361.66H8.4M5.6 363.97H8.4M6.4 366.28H8.4M6.4 368.60H8.4M6.4 370.91H8.4M6.4 373.22H8.4M6.4 377.84H8.4M6.4 380.15H8.4M6.4 382.46H8.4M6.4 384.77H8.4M5.6 387.08H8.4M6.4 389.39H8.4M6.4 391.70H8.4M6.4 394.01H8.4M6.4 396.33H8.4" stroke="#a4a4a4" stroke-width=".8" fill="none"/></svg>
<span style="left:184.9px;top:59.40px;font-size:5.3px;line-height:5.6px;color:#bcbcbc;transform-origin:0 0;transform:rotate(90deg) scaleX(1.16)">0</span>
<span style="left:184.9px;top:82.51px;font-size:5.3px;line-height:5.6px;color:#bcbcbc;transform-origin:0 0;transform:rotate(90deg) scaleX(1.16)">40</span>
<span style="left:184.9px;top:105.62px;font-size:5.3px;line-height:5.6px;color:#bcbcbc;transform-origin:0 0;transform:rotate(90deg) scaleX(1.16)">80</span>
<span style="left:184.9px;top:128.72px;font-size:5.3px;line-height:5.6px;color:#bcbcbc;transform-origin:0 0;transform:rotate(90deg) scaleX(1.16)">120</span>
<span style="left:184.9px;top:151.83px;font-size:5.3px;line-height:5.6px;color:#bcbcbc;transform-origin:0 0;transform:rotate(90deg) scaleX(1.16)">160</span>
<span style="left:184.9px;top:174.94px;font-size:5.3px;line-height:5.6px;color:#bcbcbc;transform-origin:0 0;transform:rotate(90deg) scaleX(1.16)">200</span>
<span style="left:184.9px;top:198.05px;font-size:5.3px;line-height:5.6px;color:#bcbcbc;transform-origin:0 0;transform:rotate(90deg) scaleX(1.16)">240</span>
<span style="left:184.9px;top:221.16px;font-size:5.3px;line-height:5.6px;color:#bcbcbc;transform-origin:0 0;transform:rotate(90deg) scaleX(1.16)">280</span>
<span style="left:184.9px;top:244.26px;font-size:5.3px;line-height:5.6px;color:#bcbcbc;transform-origin:0 0;transform:rotate(90deg) scaleX(1.16)">320</span>
<span style="left:184.9px;top:267.37px;font-size:5.3px;line-height:5.6px;color:#bcbcbc;transform-origin:0 0;transform:rotate(90deg) scaleX(1.16)">360</span>
<span style="left:184.9px;top:290.48px;font-size:5.3px;line-height:5.6px;color:#bcbcbc;transform-origin:0 0;transform:rotate(90deg) scaleX(1.16)">400</span>
<span style="left:184.9px;top:313.59px;font-size:5.3px;line-height:5.6px;color:#bcbcbc;transform-origin:0 0;transform:rotate(90deg) scaleX(1.16)">440</span>
<span style="left:184.9px;top:336.70px;font-size:5.3px;line-height:5.6px;color:#bcbcbc;transform-origin:0 0;transform:rotate(90deg) scaleX(1.16)">480</span>
<span style="left:184.9px;top:359.80px;font-size:5.3px;line-height:5.6px;color:#bcbcbc;transform-origin:0 0;transform:rotate(90deg) scaleX(1.16)">520</span>
<span style="left:184.9px;top:382.91px;font-size:5.3px;line-height:5.6px;color:#bcbcbc;transform-origin:0 0;transform:rotate(90deg) scaleX(1.16)">560</span>
<span style="left:184.9px;top:406.02px;font-size:5.3px;line-height:5.6px;color:#bcbcbc;transform-origin:0 0;transform:rotate(90deg) scaleX(1.16)">600</span>
<span style="left:184.9px;top:429.13px;font-size:5.3px;line-height:5.6px;color:#bcbcbc;transform-origin:0 0;transform:rotate(90deg) scaleX(1.16)">640</span>
<div style="left:619.7px;top:16px;width:3.4px;height:7.2px;background:#4a4a4a;border-radius:1.2px"></div>
<svg style="left:636px;top:17px;" width="6" height="5" viewBox="0 0 6 5"><path d="M0 0L2.5 2.5L0 5M3 0L5.5 2.5L3 5" fill="none" stroke="#6a6a6a" stroke-width="0.9"/></svg>
<div style="left:645.7px;top:16px;width:3.4px;height:7.2px;background:#4a4a4a;border-radius:1.2px"></div>
<svg style="left:662px;top:17px;" width="6" height="5" viewBox="0 0 6 5"><path d="M0 0L2.5 2.5L0 5M3 0L5.5 2.5L3 5" fill="none" stroke="#6a6a6a" stroke-width="0.9"/></svg>
<div style="left:671.7px;top:16px;width:3.4px;height:7.2px;background:#4a4a4a;border-radius:1.2px"></div>
<svg style="left:768.3px;top:17.2px;" width="3" height="5" viewBox="0 0 3 5"><path d="M0 0L2.5 2.5L0 5" fill="none" stroke="#6a6a6a" stroke-width="0.9"/></svg>
<svg style="left:784.2px;top:17.2px;" width="6" height="5" viewBox="0 0 6 5"><path d="M0 0L2.5 2.5L0 5M3 0L5.5 2.5L3 5" fill="none" stroke="#6a6a6a" stroke-width="0.9"/></svg>
<svg style="left:793px;top:17.2px;" width="6" height="5" viewBox="0 0 6 5"><path d="M2.5 0L0 2.5L2.5 5M5.5 0L3 2.5L5.5 5" fill="none" stroke="#6a6a6a" stroke-width="0.9"/></svg>
<svg style="left:621.5px;top:30.5px;" width="5" height="5" viewBox="0 0 5 5"><path d="M0 .5H5M0 2.5H5M0 4.5H5" stroke="#5a5a5a" stroke-width="0.8"/></svg>
<div style="left:631px;top:29.5px;width:12.5px;height:9px;background:#484848;"></div>
<svg style="left:634px;top:30.5px;" width="6" height="8" viewBox="0 0 6 8"><path d="M1.5 0V8M4.5 0V8" stroke="#ddd" stroke-width=".9"/><rect x=".5" y="4" width="2" height="2.4" fill="#ddd"/><rect x="3.5" y="1.2" width="2" height="2.4" fill="#ddd"/></svg>
<div style="left:618px;top:38.5px;width:25.5px;height:420.5px;background:#484848;"></div>
<div style="left:621.4px;top:42.6px;width:17.4px;height:17.4px;background:#2d2d2d;border-radius:50%"></div>
<div style="left:629.2px;top:68.5px;width:2px;height:162.5px;background:#2d2d2d;border-radius:1px"></div>
<div style="left:621.6px;top:242.9px;width:17.2px;height:17.2px;background:#9b927e;border-radius:50%"></div>
<div style="left:628.5px;top:269px;width:3px;height:162px;border-radius:1.5px;background:linear-gradient(to bottom,#000 0%,#0a0a0a 41%,rgba(0,0,0,0) 46%),repeating-conic-gradient(#f4f4f4 0 25%,#8a8a8a 0 50%) 0 0/3px 3px"></div>
<svg style="left:647.5px;top:30.5px;" width="5" height="5" viewBox="0 0 5 5"><path d="M0 .5H5M0 2.5H5M0 4.5H5" stroke="#5a5a5a" stroke-width="0.8"/></svg>
<div style="left:657px;top:29.5px;width:11.5px;height:9px;background:#414141;"></div>
<svg style="left:659.5px;top:30.5px;" width="8" height="8" viewBox="0 0 8 8"><path d="M.5 7.5L2 5L6.5 .5L7.5 1.5L3 6Z" fill="#ddd"/></svg>
<div style="left:643.7px;top:38.5px;width:24.7px;height:420.5px;background:#414141;"></div>
<svg style="left:648.5px;top:45.7px;" width="12" height="12" viewBox="0 0 12 12"><path d="M4.5 .8L8.3 2.3V6.8L4.5 8.6L.8 6.8V2.3ZM.8 2.3L4.5 4L8.3 2.3M4.5 4V8.6" fill="none" stroke="#d6d6d6" stroke-width=".8"/><path d="M6.6 5.6L11 9L8.9 9.2L9.9 11.2L9 11.6L8 9.7L6.6 11Z" fill="#d6d6d6" stroke="#414141" stroke-width=".4"/></svg>
<svg style="left:648.5px;top:65.7px;" width="12" height="12" viewBox="0 0 12 12"><circle cx="6" cy="6" r="5.2" fill="none" stroke="#d6d6d6" stroke-width=".9"/></svg>
<svg style="left:648.5px;top:86.75px;" width="12" height="10.5" viewBox="0 0 12 10.5"><path d="M.5 .8L5.2 3.6V6L.5 5.2ZM11.5 .8L6.8 3.6V6L11.5 5.2Z" fill="#e2e2e2"/><path d="M1.8 2.4L4.2 4.3M10.2 2.4L7.8 4.3" stroke="#414141" stroke-width=".6"/><rect x="5" y="3.4" width="2" height="2.8" fill="#e2e2e2"/><path d="M5.2 5.6L2.4 10M6.8 5.6L9.6 10" stroke="#e2e2e2" stroke-width="1.5"/></svg>
<div style="left:646px;top:102.3px;width:17.5px;height:0.9px;background:#6a6a6a;"></div>
<svg style="left:648.5px;top:107.6px;" width="12" height="11.4" viewBox="0 0 12 11.4"><ellipse cx="7" cy="4.6" rx="4.7" ry="3.3" fill="none" stroke="#d6d6d6" stroke-width=".85" transform="rotate(-24 7 4.6)"/><circle cx="3.2" cy="7.9" r="1.25" fill="none" stroke="#d6d6d6" stroke-width=".75"/><path d="M3.4 9.1Q2.6 10.6 .8 11" fill="none" stroke="#d6d6d6" stroke-width=".75"/></svg>
<svg style="left:648.5px;top:127.69999999999999px;" width="12" height="12" viewBox="0 0 12 12"><path d="M.8 11.2L6.6 5.4" stroke="#d6d6d6" stroke-width="1.2"/><path d="M8 .6V7.4M4.6 4H11.4M5.7 1.7L10.3 6.3M10.3 1.7L5.7 6.3" stroke="#d6d6d6" stroke-width=".8"/></svg>
<svg style="left:648.5px;top:147.3px;" width="12" height="12" viewBox="0 0 12 12"><path d="M1 11L1.8 8.2L6.6 3.4L8.6 5.4L3.8 10.2Z" fill="none" stroke="#d6d6d6" stroke-width=".9"/><path d="M6.4 2.2L9.8 5.6M7.6 3.4L9.4 1.2Q10.4 .4 11 1Q11.6 1.6 10.8 2.6L8.6 4.4Z" fill="#d6d6d6" stroke="#d6d6d6" stroke-width=".9"/></svg>
<svg style="left:648.5px;top:166.8px;" width="12" height="12.4" viewBox="0 0 12 12.4"><path d="M.5 1.2L4.2 3.4L.5 5.6Z" fill="none" stroke="#d6d6d6" stroke-width=".65"/><path d="M.6 2.4L2.8 3.4L.6 4.4" fill="none" stroke="#d6d6d6" stroke-width=".5"/><rect x="5.6" y="1.8" width="3" height="2.6" rx=".6" fill="#d6d6d6"/><path d="M2.8 8.2Q2.8 4.8 7 4.8Q11.2 4.8 11.2 8.2Z" fill="#d6d6d6"/><rect x="2.8" y="9" width="8.4" height="3" rx="1.2" fill="#d6d6d6"/></svg>
<svg style="left:648.5px;top:188.5px;" width="12" height="11" viewBox="0 0 12 11"><path d="M1 6.4L6.4 1L11 4.2L6 9.6H3.6Z" fill="#d6d6d6"/><path d="M2.6 4.8L6.4 8.8" stroke="#414141" stroke-width=".9"/><path d="M5 10.4H11" stroke="#d6d6d6" stroke-width=".8"/></svg>
<svg style="left:648.5px;top:209.0px;" width="12" height="10" viewBox="0 0 12 10"><path d="M3.6 .6Q6.8 4.6 6.8 6.6Q6.8 9.4 3.6 9.4Q.6 9.4 .6 6.6Q.6 4.6 3.6 .6Z" fill="#9a9a9a"/><path d="M8.2 .6Q11.4 4.6 11.4 6.6Q11.4 9.4 8.2 9.4Q5.2 9.4 5.2 6.6Q5.2 4.6 8.2 .6Z" fill="#c4c4c4"/></svg>
<svg style="left:648.0px;top:228.2px;" width="13" height="11" viewBox="0 0 13 11"><path d="M6.2 .6L12 5.6L6.4 10.4L.8 5.6Z" fill="#d6d6d6"/><path d="M6.2 2.4L9.4 5L3 5Z" fill="#414141"/><path d="M.6 6Q.2 8 .9 9Q1.6 8 .6 6Z" fill="#d6d6d6"/></svg>
<svg style="left:648.5px;top:247.3px;" width="12" height="12" viewBox="0 0 12 12"><rect x=".6" y=".6" width="10.8" height="10.8" rx="2.6" fill="none" stroke="#d6d6d6" stroke-width=".9"/><path d="M4 .6Q4.8 6 4 11.4M8 .6Q8.8 6 8 11.4M.6 4Q6 4.8 11.4 4M.6 8Q6 8.8 11.4 8" fill="none" stroke="#d6d6d6" stroke-width=".8"/></svg>
<div style="left:646px;top:266.3px;width:17.5px;height:0.9px;background:#6a6a6a;"></div>
<svg style="left:648.7px;top:271.59999999999997px;" width="11.6" height="11.6" viewBox="0 0 11.6 11.6"><path d="M.8 1H10.8L1.4 10.8ZM3.2 3.2H6.6L3.4 6.6Z" fill="#d6d6d6" fill-rule="evenodd"/></svg>
<svg style="left:649.5px;top:291.5px;" width="10.5" height="10.5" viewBox="0 0 10.5 10.5"><defs><linearGradient id="gq" x1="0" y1="0" x2="1" y2="1"><stop offset="0" stop-color="#5a5a5a"/><stop offset="1" stop-color="#e0e0e0"/></linearGradient></defs><rect x=".5" y=".5" width="9.5" height="9.5" rx="1.5" fill="url(#gq)" stroke="#cfcfcf" stroke-width=".8"/></svg>
<div style="left:645.7px;top:307.8px;width:18px;height:19.2px;background:#5e688b;"></div>
<svg style="left:649.0px;top:312.0px;" width="11" height="11" viewBox="0 0 11 11"><path d="M1 10.4L5.5 .8L10 10.4M2.8 7H8.2" fill="none" stroke="#f0f0f0" stroke-width="1.2"/></svg>
<svg style="left:648.5px;top:332.3px;" width="12" height="10" viewBox="0 0 12 10"><ellipse cx="6.2" cy="4.2" rx="5.2" ry="3.6" fill="none" stroke="#d6d6d6" stroke-width=".9"/><path d="M3.4 7L2 9.6L5.4 7.6" fill="#414141" stroke="#d6d6d6" stroke-width=".8"/></svg>
<svg style="left:648.5px;top:351.5px;" width="12" height="12" viewBox="0 0 12 12"><path d="M9.6 1L5.8 8.2" stroke="#d6d6d6" stroke-width="2" stroke-linecap="round"/><path d="M1 9.4H11.4" stroke="#d6d6d6" stroke-width=".8"/><path d="M.8 7.2L4.4 9.4L.8 11.4Z" fill="#d6d6d6"/></svg>
<svg style="left:649.0px;top:372.3px;" width="10.4" height="10" viewBox="0 0 10.4 10"><path d="M2.7 5.2H8.7V7.2Q8.5 9.8 6 9.9Q3.5 9.9 2.7 7.6Z" fill="#c2c2c2"/><path d="M3.5 5.6L3 2.2M5 5.2L4.9 .9M6.6 5.2L6.9 1.1M8 5.8L8.9 2.6M3 7.8L.9 5.5" stroke="#c2c2c2" stroke-width="1.25" stroke-linecap="round"/></svg>
<div style="left:643.7px;top:389.4px;width:24.7px;height:69.6px;background:#464646;"></div>
<div style="left:653.9px;top:398.2px;width:13.4px;height:14.3px;background:#1c1c5e;box-sizing:border-box;border:1px solid #505050;border-radius:1px"></div>
<div style="left:645.3px;top:391.4px;width:14.2px;height:14.6px;background:#fde9a9;box-sizing:border-box;border:1.2px solid #7d8ccf;border-radius:2px"></div>
<svg style="left:645.3px;top:415.5px;" width="22" height="6.3" viewBox="0 0 22 6.3"><defs><clipPath id="ck"><rect x=".3" y=".3" width="21.4" height="5.7" rx="1.6"/></clipPath></defs><g clip-path="url(#ck)"><rect x="0.00" y="0.00" width="3.2" height="3.2" fill="#fafafa"/><rect x="3.15" y="0.00" width="3.2" height="3.2" fill="#8f8f8f"/><rect x="6.30" y="0.00" width="3.2" height="3.2" fill="#fafafa"/><rect x="9.45" y="0.00" width="3.2" height="3.2" fill="#8f8f8f"/><rect x="12.60" y="0.00" width="3.2" height="3.2" fill="#fafafa"/><rect x="15.75" y="0.00" width="3.2" height="3.2" fill="#8f8f8f"/><rect x="18.90" y="0.00" width="3.2" height="3.2" fill="#fafafa"/><rect x="0.00" y="3.15" width="3.2" height="3.2" fill="#8f8f8f"/><rect x="3.15" y="3.15" width="3.2" height="3.2" fill="#fafafa"/><rect x="6.30" y="3.15" width="3.2" height="3.2" fill="#8f8f8f"/><rect x="9.45" y="3.15" width="3.2" height="3.2" fill="#fafafa"/><rect x="12.60" y="3.15" width="3.2" height="3.2" fill="#8f8f8f"/><rect x="15.75" y="3.15" width="3.2" height="3.2" fill="#fafafa"/><rect x="18.90" y="3.15" width="3.2" height="3.2" fill="#8f8f8f"/></g><rect x=".3" y=".3" width="21.4" height="5.7" rx="1.6" fill="none" stroke="#5c5c5c" stroke-width=".6"/></svg>
<svg style="left:674px;top:30.5px;" width="5" height="5" viewBox="0 0 5 5"><path d="M0 .5H5M0 2.5H5M0 4.5H5" stroke="#5a5a5a" stroke-width="0.8"/></svg>
<div style="left:682.6px;top:29.6px;width:48.4px;height:9.4px;background:#454545;border-radius:1px 1px 0 0"></div>
<svg style="left:686.9px;top:31.2px;" width="9.4" height="7.8" viewBox="0 0 9.4 7.8"><rect x=".5" y="1.4" width="7.6" height="5.8" rx="1.4" fill="none" stroke="#d8d8d8" stroke-width=".8"/><path d="M2 .5H7.6Q8.9 .5 8.9 1.8V5.6" fill="none" stroke="#d8d8d8" stroke-width=".6"/><rect x="2" y="2.9" width="4.6" height="2.8" fill="none" stroke="#d8d8d8" stroke-width=".6"/></svg>
<span id="t58" style="left:700.3px;top:30.30px;font-size:7px;line-height:9px;color:#f2f2f2;font-weight:bold;transform:scaleX(0.8014);">Navegador</span>
<div style="left:732.6px;top:30.3px;width:16.6px;height:8.4px;background:#454545;"></div>
<svg style="left:737px;top:32px;" width="8" height="6" viewBox="0 0 8 6"><rect x=".4" y=".4" width="7.2" height="5.2" fill="none" stroke="#8a8a8a" stroke-width=".8"/><path d="M.4 3H7.6M2.6 .4V5.6M5.4 .4V5.6" stroke="#8a8a8a" stroke-width=".6"/></svg>
<div style="left:750.6px;top:30.3px;width:16.8px;height:8.4px;background:#454545;"></div>
<svg style="left:755px;top:32px;" width="8" height="6" viewBox="0 0 8 6"><rect x=".4" y=".4" width="7.2" height="5.2" fill="none" stroke="#8a8a8a" stroke-width=".8"/><path d="M.4 2.2H7.6M4 .4V2.2" stroke="#8a8a8a" stroke-width=".6"/><rect x="1.4" y="3" width="2.4" height="1.8" fill="#8a8a8a"/></svg>
<div style="left:669.3px;top:38.5px;width:121.4px;height:62.8px;background:#484848;"></div>
<div style="left:669.3px;top:41.7px;width:121.4px;height:29.4px;background:repeating-conic-gradient(#272727 0 25%,#212121 0 50%) 0 0/2px 2px"></div>
<div style="left:715.6px;top:41.7px;width:29.4px;height:29.4px;background:#56a7b3;"></div>
<div style="left:719.2px;top:41.7px;width:23.2px;height:20.1px;background:transparent;box-sizing:border-box;border:.8px solid #b23f4e;border-top:0"></div>
<div style="left:671.9px;top:74.7px;width:19px;height:8.5px;background:#343434;box-sizing:border-box;border:.7px solid #8e8e8e"></div>
<span id="t59" style="left:673px;top:74.90px;font-size:6.6px;line-height:8.6px;color:#f0f0f0;font-weight:normal;transform:scaleX(0.8961);">144.9</span>
<div style="left:692.5px;top:74.9px;width:10.8px;height:8.1px;background:#2a2a2a;box-sizing:border-box;border:.6px solid #5c5c5c"></div>
<div style="left:690.6px;top:72.8px;width:1.9px;height:11.5px;background:#868686;border-radius:.8px"></div>
<div style="left:671.9px;top:88.3px;width:14.6px;height:8.5px;background:#343434;box-sizing:border-box;border:.7px solid #8e8e8e"></div>
<span id="t60" style="left:674.2px;top:88.50px;font-size:6.6px;line-height:8.6px;color:#f0f0f0;font-weight:normal;transform:scaleX(0.9267);">0.0</span>
<svg style="left:688.3px;top:88.5px;" width="15" height="8.1" viewBox="0 0 15 8.1"><rect x=".3" y=".3" width="14.4" height="7.5" fill="#2a2a2a" stroke="#5c5c5c" stroke-width=".6"/><path d="M.6 7.5V1.2Q6 1 9 2.4Q12.5 4.4 14.2 7.5Z" fill="#1c1c1c"/></svg>
<div style="left:686.4px;top:86.7px;width:1.9px;height:11.5px;background:#868686;border-radius:.8px"></div>
<svg style="left:709.0px;top:74.6px;" width="10" height="10" viewBox="0 0 10 10"><circle cx="5" cy="5" r="4.5" fill="none" stroke="#cdcdcd" stroke-width=".75"/><path d="M2.6 5H7.4" stroke="#cdcdcd" stroke-width=".8"/></svg>
<svg style="left:725.8px;top:74.6px;" width="10" height="10" viewBox="0 0 10 10"><circle cx="5" cy="5" r="4.5" fill="none" stroke="#cdcdcd" stroke-width=".75"/><path d="M2.6 5H7.4M5 2.6V7.4" stroke="#cdcdcd" stroke-width=".8"/></svg>
<svg style="left:742.1px;top:74.6px;" width="10" height="10" viewBox="0 0 10 10"><circle cx="5" cy="5" r="4.5" fill="none" stroke="#cdcdcd" stroke-width=".75"/><rect x="2.9" y="2.9" width="4.2" height="4.2" rx=".8" fill="#cdcdcd"/><path d="M4.3 2.9V7.1M5.7 2.9V7.1M2.9 4.3H7.1M2.9 5.7H7.1" stroke="#7a7a7a" stroke-width=".35"/></svg>
<div style="left:757.3px;top:73.5px;width:0.7px;height:26px;background:#5e5e5e;"></div>
<svg style="left:760.7px;top:74.6px;" width="10" height="10" viewBox="0 0 10 10"><rect x=".8" y=".8" width="4.4" height="4.4" rx=".8" fill="none" stroke="#cdcdcd" stroke-width=".8"/><rect x="4.8" y="4.8" width="4.4" height="4.4" rx=".8" fill="none" stroke="#cdcdcd" stroke-width=".8"/><path d="M6.4 1.6L8.4 3.6M8.4 1.9V3.6H6.7M3.6 8.4L1.6 6.4M1.6 8.1V6.4H3.3" fill="none" stroke="#cdcdcd" stroke-width=".6"/></svg>
<svg style="left:777.7px;top:74.6px;" width="10" height="10" viewBox="0 0 10 10"><rect x=".9" y=".9" width="8.2" height="8.2" rx="1.2" fill="none" stroke="#cdcdcd" stroke-width=".8"/><rect x="2.2" y="5.4" width="2.4" height="2.4" fill="#cdcdcd"/><path d="M5 5L7.6 2.4M5.6 2.4H7.6V4.4" fill="none" stroke="#cdcdcd" stroke-width=".8"/></svg>
<svg style="left:709.0px;top:89.0px;" width="10" height="10" viewBox="0 0 10 10"><path d="M4.4 9.2Q8 9.6 8.8 6.4Q9.3 2.6 5.8 1.6Q2.8 1.2 1.6 4" fill="none" stroke="#cdcdcd" stroke-width=".8"/><path d="M.2 3L1.2 6L3.6 4.2Z" fill="#cdcdcd"/></svg>
<svg style="left:725.8px;top:89.0px;" width="10" height="10" viewBox="0 0 10 10"><path d="M5.6 9.2Q2 9.6 1.2 6.4Q.7 2.6 4.2 1.6Q7.2 1.2 8.4 4" fill="none" stroke="#cdcdcd" stroke-width=".8"/><path d="M9.8 3L8.8 6L6.4 4.2Z" fill="#cdcdcd"/></svg>
<svg style="left:742.1px;top:89.0px;" width="10" height="10" viewBox="0 0 10 10"><circle cx="5" cy="5" r="4.5" fill="none" stroke="#cdcdcd" stroke-width=".75"/><path d="M5 1.6V5" stroke="#cdcdcd" stroke-width=".8"/><circle cx="5" cy="5.6" r="1.2" fill="#cdcdcd"/></svg>
<svg style="left:760.7px;top:89.0px;" width="10" height="10" viewBox="0 0 10 10"><path d="M.8 2L3.6 5L.8 8Z" fill="none" stroke="#cdcdcd" stroke-width=".7"/><path d="M9.4 1.8L6.2 5L9.4 8.2Z" fill="#cdcdcd"/><path d="M5 .6V9.4" stroke="#cdcdcd" stroke-width=".7"/></svg>
<svg style="left:777.7px;top:89.0px;" width="10" height="10" viewBox="0 0 10 10"><path d="M2 .6L5 3.8L8 .6Z" fill="#cdcdcd"/><path d="M2.2 9.2L5 6.4L7.8 9.2Z" fill="none" stroke="#cdcdcd" stroke-width=".7"/><path d="M.6 5H9.4" stroke="#cdcdcd" stroke-width=".7"/></svg>
<svg style="left:674px;top:108px;" width="5" height="5" viewBox="0 0 5 5"><path d="M0 .5H5M0 2.5H5M0 4.5H5" stroke="#5a5a5a" stroke-width="0.8"/></svg>
<div style="left:682.6px;top:105.4px;width:32.2px;height:10.3px;background:#454545;border-radius:1px 1px 0 0"></div>
<svg style="left:687px;top:107.2px;" width="8" height="9" viewBox="0 0 8 9"><path d="M4 .6L7.4 2.4L4 4.2L.6 2.4Z" fill="none" stroke="#ddd" stroke-width=".8"/><path d="M.6 2.4V6.4L4 8.3L7.4 6.4V2.4M.6 4.4L4 6.3L7.4 4.4" fill="none" stroke="#ddd" stroke-width=".8"/></svg>
<span id="t61" style="left:700.3px;top:107.10px;font-size:7px;line-height:9px;color:#f2f2f2;font-weight:bold;transform:scaleX(0.8000);">Capa</span>
<div style="left:716.4px;top:106px;width:16.7px;height:9.7px;background:#414141;"></div>
<svg style="left:721.5px;top:108px;" width="8" height="7" viewBox="0 0 8 7"><path d="M4 .6L7.4 2.8V6.4H.6V2.8Z" fill="none" stroke="#777" stroke-width=".8"/><path d="M2.4 6.4Q4 3.6 5.6 6.4" fill="none" stroke="#777" stroke-width=".7"/></svg>
<div style="left:735px;top:106px;width:16.7px;height:9.7px;background:#414141;"></div>
<svg style="left:739px;top:108.3px;" width="8" height="6.5" viewBox="0 0 8 6.5"><rect x=".4" y=".4" width="7.2" height="5.6" fill="none" stroke="#999" stroke-width=".8"/><path d="M1.8 2L3.4 3.1L1.8 4.2M3.6 4.6H6" fill="none" stroke="#999" stroke-width=".7"/></svg>
<div style="left:669.3px;top:115.7px;width:121.2px;height:48.8px;background:#484848;"></div>
<div style="left:670.5px;top:118px;width:23.5px;height:13.8px;background:#545454;box-sizing:border-box;border:.8px solid #626262;border-radius:1px"></div>
<div style="left:673px;top:121px;width:10px;height:7.3px;background:#4f4f4f;box-sizing:border-box;border:.9px solid #a4a4a4;border-radius:1px"></div>
<svg style="left:686px;top:123.6px;" width="4.6" height="2.8" viewBox="0 0 4.6 2.8"><path d="M0 0L2.3 2.8L4.6 0" fill="none" stroke="#d0d0d0" stroke-width="0.9"/></svg>
<div style="left:695.4px;top:118px;width:35.3px;height:13.8px;background:#545454;box-sizing:border-box;border:.8px solid #626262;border-radius:1px"></div>
<span id="t62" style="left:698.7px;top:120.10px;font-size:7.8px;line-height:9.8px;color:#eeeeee;font-weight:normal;transform:scaleX(0.8035);">Normal</span>
<svg style="left:722.4px;top:123.6px;" width="4.8" height="2.8" viewBox="0 0 4.8 2.8"><path d="M0 0L2.4 2.8L4.8 0" fill="none" stroke="#d0d0d0" stroke-width="0.9"/></svg>
<div style="left:733.6px;top:121.2px;width:33.6px;height:5.8px;background:repeating-conic-gradient(#f4f4f4 0 25%,#c2c2c2 0 50%) 0 0/5.8px 5.8px"></div>
<div style="left:767.2px;top:117.9px;width:2px;height:11.6px;background:#8c8c8c;border-radius:1px"></div>
<span id="t63" style="left:772.2px;top:118.50px;font-size:7.8px;line-height:9.8px;color:#eeeeee;font-weight:normal;transform:scaleX(0.7837);">100</span>
<svg style="left:784.2px;top:119.6px;" width="4.4" height="8" viewBox="0 0 4.4 8"><path d="M.4 2.4L2.2 .5L4 2.4M.4 5.6L2.2 7.5L4 5.6" fill="none" stroke="#ddd" stroke-width=".7"/></svg>
<svg style="left:687.0px;top:135.2px;" width="10" height="10" viewBox="0 0 10 10"><rect x="2.6" y=".6" width="6.4" height="6.4" rx="1.2" fill="none" stroke="#c6c6c6" stroke-width=".8"/><rect x=".8" y="2.6" width="6.4" height="6.4" rx="1.2" fill="#484848" stroke="#c6c6c6" stroke-width=".8"/><rect x="2.4" y="4.2" width="3.2" height="3.2" fill="#c6c6c6"/></svg>
<svg style="left:704.0px;top:135.2px;" width="10" height="10" viewBox="0 0 10 10"><path d="M1 1.4H9M2 1.4V2.6H8V1.4M4 2.6V3.6H6V2.6M3.6 4L3 9H7L6.4 4ZM1.6 9.4H8.4" fill="none" stroke="#c6c6c6" stroke-width=".9"/><path d="M3.4 5.4H6.6M3.2 7H6.8" stroke="#c6c6c6" stroke-width=".7"/></svg>
<svg style="left:720.8px;top:135.2px;" width="10" height="10" viewBox="0 0 10 10"><path d="M3 4.6V3Q3 1 5 1Q7 1 7 3V4.6" fill="none" stroke="#c6c6c6" stroke-width="1"/><rect x="1.8" y="4.6" width="6.4" height="4.8" rx=".6" fill="#c6c6c6"/></svg>
<svg style="left:737.5px;top:135.2px;" width="10" height="10" viewBox="0 0 10 10"><path d="M3 4.2V3Q3 1.6 4.2 1.6Q5.4 1.6 5.4 3V4.2" fill="none" stroke="#c6c6c6" stroke-width=".9"/><rect x="1.4" y="4.4" width="5.2" height="4.8" fill="#c6c6c6"/><rect x="6.6" y="1" width="1.6" height="1.6" fill="#c6c6c6"/><rect x="8.2" y="2.6" width="1.6" height="1.6" fill="#c6c6c6"/><rect x="6.6" y="4.2" width="1.6" height="1.6" fill="#c6c6c6"/><rect x="8.2" y="5.8" width="1.6" height="1.6" fill="#c6c6c6"/></svg>
<div style="left:752.5px;top:135px;width:16px;height:10px;background:#4d4d4d;box-sizing:border-box;border:.6px dotted #5e5e5e"></div>
<div style="left:773.4px;top:135px;width:15.6px;height:10px;background:#4d4d4d;box-sizing:border-box;border:.6px dotted #5e5e5e"></div>
<svg style="left:754.5px;top:135.2px;" width="13" height="10" viewBox="0 0 13 10"><rect x=".6" y="1" width="9" height="8" fill="none" stroke="#6e6e6e" stroke-width=".8" stroke-dasharray="1.4 .9"/><path d="M2.4 3H5.6V6.4H2.4Z" fill="#6e6e6e"/><path d="M7.6 4.6L9.6 6.8L11.6 4.6" fill="none" stroke="#6e6e6e" stroke-width=".9"/></svg>
<svg style="left:774.1px;top:135.2px;" width="13" height="10" viewBox="0 0 13 10"><rect x=".6" y="1" width="9" height="8" fill="none" stroke="#6e6e6e" stroke-width=".8" stroke-dasharray="1.4 .9"/><path d="M1.4 8.4L8.8 1.6M1.4 5L5 1.6" stroke="#6e6e6e" stroke-width=".8"/><path d="M7.6 4.6L9.6 6.8L11.6 4.6" fill="none" stroke="#6e6e6e" stroke-width=".9"/></svg>
<svg style="left:676.7px;top:150.9px;" width="10" height="10" viewBox="0 0 10 10"><path d="M9 5.8V2Q9 .8 7.8 .8H2Q.8 .8 .8 2V7.6Q.8 8.8 2 8.8H5.8" fill="none" stroke="#c6c6c6" stroke-width=".9"/><circle cx="8.2" cy="8.2" r="1.9" fill="#484848" stroke="#c6c6c6" stroke-width=".7"/></svg>
<svg style="left:693.7px;top:150.9px;" width="10" height="10" viewBox="0 0 10 10"><rect x=".8" y=".8" width="8.2" height="8" rx="1.2" fill="none" stroke="#c6c6c6" stroke-width=".9"/><circle cx="4.6" cy="4.6" r="2" fill="none" stroke="#c6c6c6" stroke-width=".8"/><path d="M6.2 3L7 2.2" stroke="#c6c6c6" stroke-width=".7"/><circle cx="8.2" cy="8.2" r="1.9" fill="#484848" stroke="#c6c6c6" stroke-width=".7"/></svg>
<svg style="left:710.4px;top:150.9px;" width="10" height="10" viewBox="0 0 10 10"><path d="M.6 1.2H3.8L4.8 2.4H9.2V8.4H.6Z" fill="#c6c6c6"/><circle cx="8.2" cy="8.2" r="1.9" fill="#484848" stroke="#c6c6c6" stroke-width=".7"/></svg>
<svg style="left:727.3px;top:150.9px;" width="10" height="10" viewBox="0 0 10 10"><rect x=".8" y="3" width="5.6" height="5.6" rx="1.2" fill="none" stroke="#6e6e6e" stroke-width=".8"/><circle cx="6.6" cy="3.2" r="2.6" fill="none" stroke="#6e6e6e" stroke-width=".8"/><path d="M6.6 2V4.4M5.6 3.4L6.6 4.6L7.6 3.4" fill="none" stroke="#6e6e6e" stroke-width=".6"/></svg>
<svg style="left:744.0px;top:150.9px;" width="10" height="10" viewBox="0 0 10 10"><rect x="3.4" y=".8" width="5.8" height="5.8" rx="1.4" fill="none" stroke="#c6c6c6" stroke-width=".9"/><rect x=".8" y="3.4" width="5.8" height="5.8" rx="1.4" fill="#484848" stroke="#c6c6c6" stroke-width=".9"/><path d="M2.6 6.2H4.8M3.8 5.2L4.9 6.3L3.8 7.4" fill="none" stroke="#c6c6c6" stroke-width=".6"/></svg>
<svg style="left:760.6px;top:150.9px;" width="10" height="10" viewBox="0 0 10 10"><rect x=".8" y=".8" width="8.4" height="8.4" rx="1" fill="#e8e8e8"/><circle cx="5" cy="5" r="2.5" fill="#3a3a3a"/></svg>
<svg style="left:777.3px;top:150.9px;" width="10" height="10" viewBox="0 0 10 10"><path d="M1.4 2.4H8.6M3.6 2.4V1H6.4V2.4M2.2 2.8L2.6 9.2H7.4L7.8 2.8M4 4V8M6 4V8" fill="none" stroke="#8e8e8e" stroke-width=".9"/></svg>
<div style="left:669.3px;top:164.5px;width:121.2px;height:294.5px;background:#3c3c3c;"></div>
<div style="left:669.3px;top:164.5px;width:15.3px;height:86.5px;background:#343434;"></div>
<div style="left:685.2px;top:164.5px;width:14px;height:86.5px;background:#343434;"></div>
<div style="left:699.4px;top:164.8px;width:88.6px;height:42.8px;background:#5e688b;"></div>
<div style="left:702.5px;top:165.4px;width:40.9px;height:40.8px;background:#56a7b3;box-sizing:border-box;border:1px solid #e6e6e6;box-shadow:inset 0 0 0 .7px #222"></div>
<svg style="left:672px;top:183.1px;" width="10" height="6" viewBox="0 0 10 6"><path d="M.4 3Q5 -1.6 9.6 3Q5 7.6 .4 3Z" fill="none" stroke="#d2d2d2" stroke-width=".8"/><circle cx="5" cy="3" r="1.9" fill="#d2d2d2"/></svg>
<svg style="left:686.5px;top:181.5px;" width="9" height="9" viewBox="0 0 9 9"><path d="M1.4 6.4L7 .8" stroke="#e0e0e0" stroke-width="1.1"/><path d="M.6 8.3H8.4" stroke="#e0e0e0" stroke-width=".8"/></svg>
<span id="t64" style="left:748px;top:171.30px;font-size:7px;line-height:9px;color:#eceef6;font-weight:normal;transform:scaleX(0.8308);">100 %</span>
<span id="t65" style="left:765.3px;top:172.50px;font-size:5.4px;line-height:7.4px;color:#c4c8dc;font-weight:normal;transform:scaleX(0.7866);">No:</span>
<span id="t66" style="left:748px;top:196.30px;font-size:7px;line-height:9px;color:#eceef6;font-weight:normal;transform:scaleX(0.8415);">Capa 1</span>
<svg style="left:779.6px;top:184px;" width="4" height="5.4" viewBox="0 0 4 5.4"><path d="M0 .5H4M0 2.7H4M0 4.9H4" stroke="#2e3144" stroke-width=".9"/></svg>
<div style="left:669.3px;top:207.6px;width:121.2px;height:0.9px;background:#2c2c2c;"></div>
<div style="left:703.8px;top:210.5px;width:37.9px;height:38.4px;background:#f2f2f2;"></div>
<div style="left:750px;top:210.5px;width:10.9px;height:10.5px;background:#f0f0f0;border-radius:1.5px"></div>
<svg style="left:752.3px;top:212px;" width="6.4" height="7.6" viewBox="0 0 6.4 7.6"><path d="M.8 .5H5.6V7H2.4L.8 5.4Z" fill="none" stroke="#333" stroke-width=".9"/><path d="M.8 5.4H2.4V7" fill="none" stroke="#333" stroke-width=".6"/></svg>
<svg style="left:672px;top:226.7px;" width="10" height="6" viewBox="0 0 10 6"><path d="M.4 3Q5 -1.6 9.6 3Q5 7.6 .4 3Z" fill="none" stroke="#d2d2d2" stroke-width=".8"/><circle cx="5" cy="3" r="1.9" fill="#d2d2d2"/></svg>
<div style="left:688.7px;top:226.7px;width:6px;height:6px;background:#383838;box-sizing:border-box;border:.8px solid #262626"></div>
<span id="t67" style="left:748px;top:240.00px;font-size:7px;line-height:9px;color:#e8e8e8;font-weight:normal;transform:scaleX(0.8656);">Papel</span>
<svg style="left:779.6px;top:227px;" width="4" height="5.4" viewBox="0 0 4 5.4"><path d="M0 .5H4M0 2.7H4M0 4.9H4" stroke="#2c2c2c" stroke-width=".9"/></svg>
<div style="left:669.3px;top:250.6px;width:121.2px;height:0.9px;background:#2e2e2e;"></div>
<div style="left:788px;top:164.5px;width:2.5px;height:294.5px;background:#424242;"></div>
<div style="left:796px;top:98.4px;width:4px;height:52.6px;background:#4b4b4b;border-radius:2px 0 0 2px"></div>
<svg style="left:783px;top:361px;overflow:hidden" width="17" height="32" viewBox="0 0 17 32"><circle cx="15.7" cy="15.7" r="14.4" fill="#484848" stroke="#dadada" stroke-width="1.2"/><path d="M10.2 12.6L7.2 15.7L10.2 18.8" fill="none" stroke="#dadada" stroke-width="1.1"/><rect x="13.4" y="10.6" width="6" height="10.2" fill="#bdbdbd" stroke="#dadada" stroke-width="1"/></svg>
</body></html>
